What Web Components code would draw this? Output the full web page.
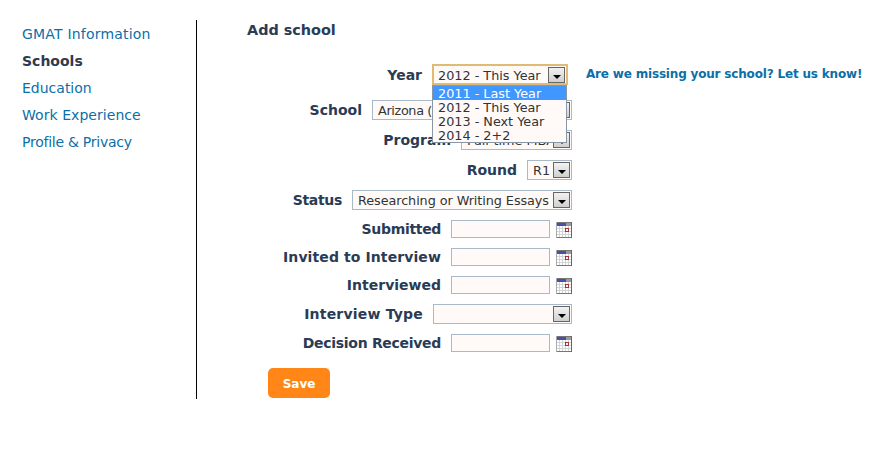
<!DOCTYPE html>
<html>
<head>
<meta charset="utf-8">
<title>Add school</title>
<style>
  html, body { margin: 0; background: #fff; }
  body { font-family: "DejaVu Sans", Verdana, sans-serif; }
</style>
</head>
<body>
<profile-page>
  <side-nav slot="nav">
    <nav-item style="letter-spacing: .2px">GMAT Information</nav-item>
    <nav-item current>Schools</nav-item>
    <nav-item>Education</nav-item>
    <nav-item style="letter-spacing: .05px">Work Experience</nav-item>
    <nav-item style="letter-spacing: -.25px">Profile &amp; Privacy</nav-item>
  </side-nav>
  <school-form>
    <form-row label="Year" class="first">
      <fake-select value="2012 - This Year" width="135" focused
        options="2011 - Last Year|2012 - This Year|2013 - Next Year|2014 - 2+2"></fake-select>
    </form-row>
    <form-row label="School"><fake-select value="Arizona (Eller)" width="200" style="letter-spacing: -.35px"></fake-select></form-row>
    <form-row label="Program"><fake-select value="Full-time MBA" width="111"></fake-select></form-row>
    <form-row label="Round"><fake-select value="R1" width="45"></fake-select></form-row>
    <form-row label="Status" tracking="-.33px"><fake-select value="Researching or Writing Essays" width="220" style="letter-spacing: -.07px"></fake-select></form-row>
    <form-row label="Submitted" tracking="-.33px"><date-field></date-field></form-row>
    <form-row label="Invited to Interview" tracking=".1px"><date-field></date-field></form-row>
    <form-row label="Interviewed"><date-field></date-field></form-row>
    <form-row label="Interview Type" tracking=".2px"><fake-select value="" width="139"></fake-select></form-row>
    <form-row label="Decision Received" tracking="-.3px"><date-field></date-field></form-row>
    <save-button slot="actions">Save</save-button>
    <span slot="aside">Are we missing your school? Let us know!</span>
  </school-form>
</profile-page>

<script>
// page shell: nav column on the left, form on the right
class ProfilePage extends HTMLElement {
  constructor() {
    super();
    const shadow = this.attachShadow({mode: "open"});
    shadow.innerHTML = `<style>
      :host { display: flex; align-items: flex-start; padding-top: 20px; }
      main { padding-left: 50px; }
    </style>
    <slot name="nav"></slot>
    <main><slot></slot></main>`;
  }
}

class SideNav extends HTMLElement {
  constructor() {
    super();
    const shadow = this.attachShadow({mode: "open"});
    shadow.innerHTML = `<style>
      :host {
        display: flex;
        flex-direction: column;
        box-sizing: border-box;
        width: 197px;
        height: 379px;
        padding: 4px 0 0 22px;
        border-right: 1px solid #000;
      }
    </style>
    <slot></slot>`;
  }
}

class NavItem extends HTMLElement {
  constructor() {
    super();
    const shadow = this.attachShadow({mode: "open"});
    shadow.innerHTML = `<style>
      :host {
        display: block;
        height: 27px;
        line-height: 20px;
        font-size: 14px;
        color: #0b6fa8;
      }
      :host([current]) { font-weight: bold; color: #2f3a4f; }
    </style>
    <slot></slot>`;
  }
}

class SchoolForm extends HTMLElement {
  constructor() {
    super();
    const shadow = this.attachShadow({mode: "open"});
    shadow.innerHTML = `<style>
      :host { display: block; }
      h2 {
        margin: 0 0 25px;
        height: 20px;
        line-height: 20px;
        font-size: 14.4px;
        font-weight: bold;
        color: #2a3b55;
      }
      .wrap { display: flex; align-items: flex-start; }
      .rows {
        display: flex;
        flex-direction: column;
        width: 325px;
        gap: 10px;
      }
      .actions { display: block; padding: 16px 0 0 21px; }
      .aside {
        display: block;
        margin: 1px 0 0 14px;
        line-height: 16px;
        font-size: 12px;
        font-weight: bold;
        letter-spacing: -.18px;
        color: #0b6fa8;
        white-space: nowrap;
      }
    </style>
    <h2>Add school</h2>
    <div class="wrap">
      <div>
        <div class="rows"><slot></slot></div>
        <div class="actions"><slot name="actions"></slot></div>
      </div>
      <div class="aside"><slot name="aside"></slot></div>
    </div>`;
  }
}

// right aligned label + control
class FormRow extends HTMLElement {
  constructor() {
    super();
    const shadow = this.attachShadow({mode: "open"});
    shadow.innerHTML = `<style>
      :host {
        display: flex;
        justify-content: flex-end;
        align-items: center;
        gap: 10px;
      }
      :host(.first) { margin: 0 5px 5px 0; }
      label {
        font-size: 14px;
        font-weight: bold;
        color: #2a3b55;
        white-space: nowrap;
      }
    </style>
    <label></label><slot></slot>`;
    const label = shadow.querySelector("label");
    label.textContent = this.getAttribute("label");
    if (this.hasAttribute("tracking")) label.style.letterSpacing = this.getAttribute("tracking");
  }
}

class FakeSelect extends HTMLElement {
  constructor() {
    super();
    const shadow = this.attachShadow({mode: "open"});
    shadow.innerHTML = `<style>
      :host {
        display: block;
        position: relative;
        box-sizing: border-box;
        height: 20px;
        font-size: 12.8px;
        color: #333;
      }
      .box {
        display: flex;
        align-items: center;
        justify-content: space-between;
        box-sizing: border-box;
        height: 20px;
        padding: 0 1px 0 5px;
        background: #fffaf7;
        border: 1px solid #a9b9c8;
      }
      :host([focused]) .box {
        width: 136px;
        height: 21px;
        margin-top: -1px;
        border: 2px solid #e0bb74;
        padding-left: 4px;
      }
      .val { white-space: nowrap; overflow: hidden; line-height: 16px; padding-top: 1px; }
      :host([focused]) .val { padding-top: 3px; }
      .btn {
        flex: none;
        display: flex;
        align-items: flex-end;
        justify-content: center;
        box-sizing: border-box;
        width: 17px;
        height: 16px;
        margin-left: 3px;
        padding-bottom: 3px;
        background: linear-gradient(#f2f2f2, #cfcfcf);
        border: 1px solid #666;
      }
      .btn i {
        width: 0;
        height: 0;
        border: 4px solid transparent;
        border-top: 4px solid #000;
        border-bottom: 0;
      }
      ul {
        position: absolute;
        left: 0;
        right: 0;
        top: 20px;
        z-index: 2;
        margin: 0;
        padding: 0;
        list-style: none;
        box-sizing: border-box;
        height: 58px;
        background: #fffaf7;
        border: 1px solid #8a97a6;
      }
      li { height: 14px; line-height: 15px; padding-left: 5px; white-space: nowrap; }
      li:first-child { background: #3f97ff; color: #fff; }
    </style>
    <div class="box"><span class="val"></span><span class="btn"><i></i></span></div>`;
    this.style.width = this.getAttribute("width") + "px";
    shadow.querySelector(".val").textContent = this.getAttribute("value");
    const options = this.getAttribute("options");
    if (options) {
      const list = document.createElement("ul");
      options.split("|").forEach((o) => {
        const li = document.createElement("li");
        li.textContent = o;
        list.appendChild(li);
      });
      shadow.appendChild(list);
    }
  }
}

class DateField extends HTMLElement {
  constructor() {
    super();
    const shadow = this.attachShadow({mode: "open"});
    shadow.innerHTML = `<style>
      :host { display: flex; align-items: center; gap: 6px; height: 18px; }
      .in {
        box-sizing: border-box;
        width: 99px;
        height: 18px;
        background: #fffaf7;
        border: 1px solid #a9b9c8;
      }
      svg { display: block; margin-top: 2px; }
    </style>
    <div class="in"></div>
    <svg width="16" height="16" viewBox="0 0 16 16" shape-rendering="crispEdges">
      <rect x="0" y="0" width="16" height="16" fill="#fff"/>
      <path d="M1 6.5H15M1 9.5H15M1 12.5H15M3.5 4V15M6.5 4V15M9.5 4V15M12.5 4V15" stroke="#d4d4d4" fill="none"/>
      <rect x="0" y="0" width="16" height="1" fill="#777"/>
      <rect x="0" y="15" width="16" height="1" fill="#777"/>
      <rect x="15" y="0" width="1" height="16" fill="#666"/>
      <rect x="0" y="0" width="1" height="16" fill="#aaa"/>
      <rect x="1" y="1" width="9" height="3" fill="#4a4fa8"/>
      <rect x="10" y="1" width="5" height="3" fill="#9a9a9a"/>
      <rect x="9.5" y="6.5" width="3" height="3" fill="#fff" stroke="#a33" stroke-width="1"/>
    </svg>`;
  }
}

class SaveButton extends HTMLElement {
  constructor() {
    super();
    const shadow = this.attachShadow({mode: "open"});
    shadow.innerHTML = `<style>
      :host {
        display: block;
        width: 62px;
        height: 30px;
        line-height: 32px;
        text-align: center;
        border-radius: 5px;
        background: #ff8617;
        color: #fff;
        font-size: 12px;
        font-weight: bold;
      }
    </style>
    <slot></slot>`;
  }
}

customElements.define("profile-page", ProfilePage);
customElements.define("side-nav", SideNav);
customElements.define("nav-item", NavItem);
customElements.define("school-form", SchoolForm);
customElements.define("form-row", FormRow);
customElements.define("fake-select", FakeSelect);
customElements.define("date-field", DateField);
customElements.define("save-button", SaveButton);
</script>
</body>
</html>
